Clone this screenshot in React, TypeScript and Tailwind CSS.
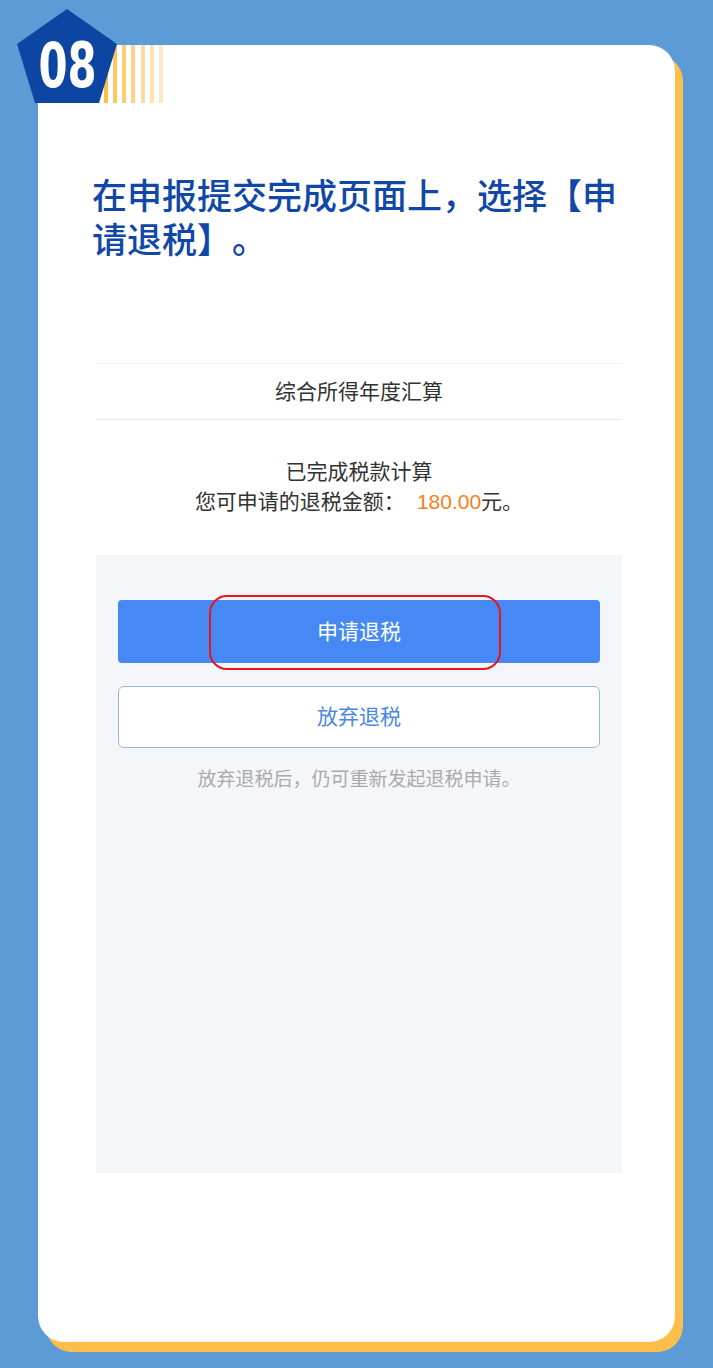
import React from "react";

const cjk = { fontFamily: '"Liberation Sans", "Noto Sans CJK SC", sans-serif' };

function Badge() {
  const stripes = [104, 113, 122, 131, 141, 150, 159];
  return (
    <div className="absolute left-0 top-0 w-[170px] h-[110px]">
      {stripes.map((x, i) => (
        <div
          key={x}
          className="absolute top-[45px] h-[58px] w-[4px] bg-[#ffbe4c]"
          style={{ left: x, opacity: 1 - i * 0.11 }}
        />
      ))}
      <svg className="absolute left-0 top-0" width="120" height="110" viewBox="0 0 120 110">
        <polygon points="67,9 117,44 99,103 35,103 17,44" fill="#0c46a2" />
      </svg>
      <div
        className="absolute left-[40px] top-[34px] w-[55px] h-[64px] flex items-center justify-center text-white font-bold text-[62px] leading-none scale-x-[0.75]"
        style={{ fontFamily: '"DejaVu Sans Condensed", "DejaVu Sans", sans-serif' }}
      >
        08
      </div>
    </div>
  );
}

export default function App() {
  return (
    <div className="relative w-[713px] h-[1368px] bg-[#5c9bd6] overflow-hidden [text-spacing-trim:space-all]" style={cjk}>
      <div className="pt-[45px] pl-[38px]">
        <div className="w-[637px] h-[1297px] bg-white rounded-[26px] shadow-[8px_10px_0_#ffbd4a] flex flex-col">
          <h1 className="pt-[130px] pl-[54px] pr-[30px] text-[35px] leading-[44px] font-medium text-[#1148a8]">
            在申报提交完成页面上，选择【申请退税】。
          </h1>

          <div className="ml-[58px] mr-[53px] mt-[100px] flex flex-col">
            <div className="h-px bg-[#f2f2f2]" />
            <div className="h-[55px] flex items-center justify-center text-[21px] text-[#333333]">
              综合所得年度汇算
            </div>
            <div className="h-px bg-[#e6e6e6]" />
            <div className="pt-[37px] pb-[38px] flex flex-col items-center text-[21px] leading-[30px] text-[#333333]">
              <p>已完成税款计算</p>
              <p>
                您可申请的退税金额：<span className="ml-[12px] text-[#f5801e]">180.00</span>元。
              </p>
            </div>

            <div className="h-[618px] bg-[#f4f6fa] pt-[45px] px-[22px] flex flex-col">
              <div className="relative">
                <button className="w-full h-[63px] rounded-[4px] bg-[#4689f4] text-white text-[21px]">
                  申请退税
                </button>
                <div className="absolute left-[91px] top-[-5px] w-[292px] h-[75px] rounded-[18px] border-[2.5px] border-[#e8141a]" />
              </div>
              <button className="mt-[23px] w-full h-[62px] rounded-[6px] bg-white border border-[#93b6ef] text-[#4a87e0] text-[21px]">
                放弃退税
              </button>
              <p className="mt-[18px] text-center text-[19px] text-[#aaaaaa]">
                放弃退税后，仍可重新发起退税申请。
              </p>
            </div>
          </div>
        </div>
      </div>
      <Badge />
    </div>
  );
}
